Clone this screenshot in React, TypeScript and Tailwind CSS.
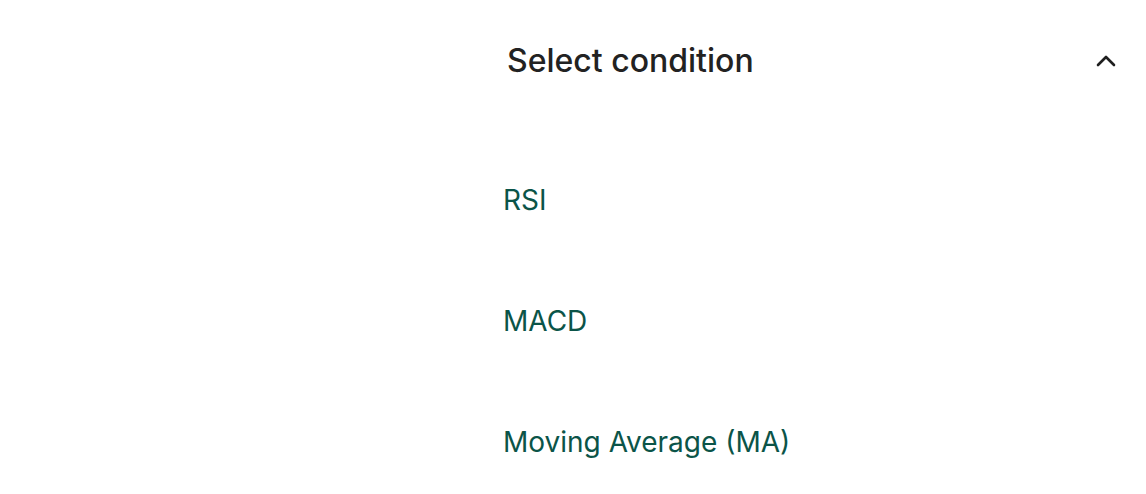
import React from "react";

export default function App() {
  const items = ["RSI", "MACD", "Moving Average (MA)"];
  return (
    <div
      className="w-[1146px] h-[494px] bg-white flex overflow-hidden"
      style={{ fontFamily: "Inter, 'Noto Sans', sans-serif" }}
    >
      <div className="w-[490px] shrink-0" />
      <div className="flex-1 flex flex-col overflow-hidden">
        <div className="h-[122px] shrink-0 flex items-center justify-between pl-[17px] pr-[28px]">
          <span className="text-[32px] font-medium text-[#222222]">Select condition</span>
          <svg width="24" height="24" viewBox="0 0 24 24" fill="none" className="text-[#1f1f1f]">
            <path d="M4 16L12 8L20 16" stroke="currentColor" strokeWidth="2.6" strokeLinecap="round" strokeLinejoin="round" />
          </svg>
        </div>
        <div className="flex flex-col shrink-0 pl-[13px] pt-[17px]">
          {items.map((it) => (
            <div key={it} className="h-[121px] shrink-0 flex items-center text-[28px] text-[#0b5448]">
              {it}
            </div>
          ))}
        </div>
      </div>
    </div>
  );
}
